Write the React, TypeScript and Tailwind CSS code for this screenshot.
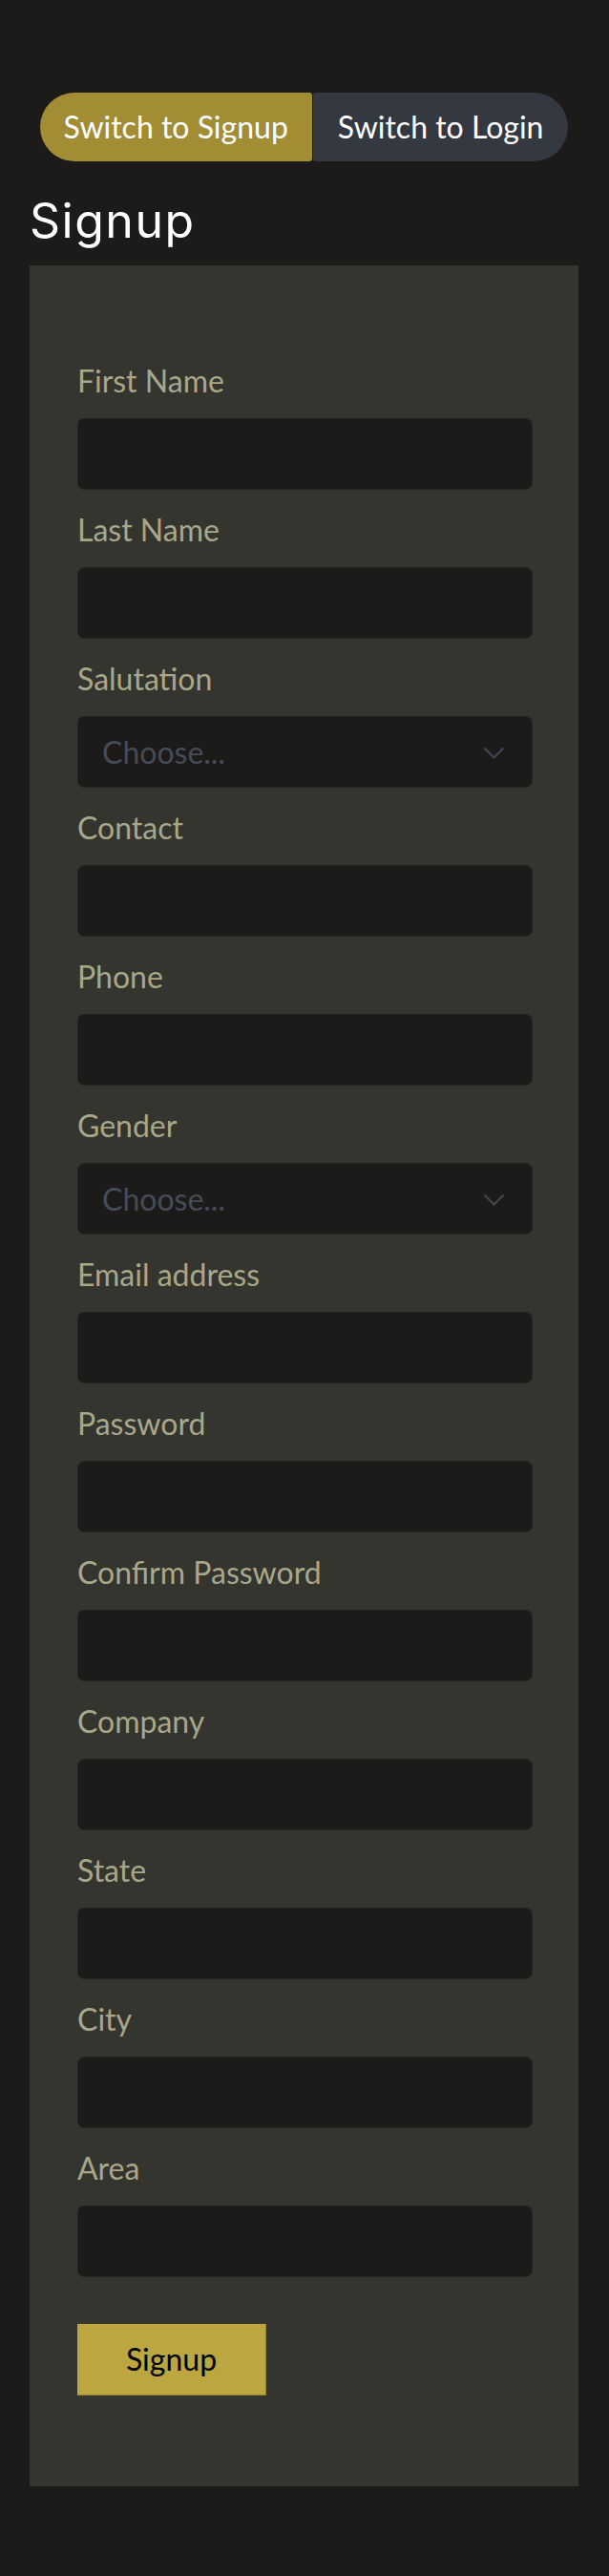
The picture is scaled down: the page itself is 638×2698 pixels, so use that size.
import { useState } from "react";

const fields: { label: string; type: "text" | "select" | "password" | "email" }[] = [
  { label: "First Name", type: "text" },
  { label: "Last Name", type: "text" },
  { label: "Salutation", type: "select" },
  { label: "Contact", type: "text" },
  { label: "Phone", type: "text" },
  { label: "Gender", type: "select" },
  { label: "Email address", type: "email" },
  { label: "Password", type: "password" },
  { label: "Confirm Password", type: "password" },
  { label: "Company", type: "text" },
  { label: "State", type: "text" },
  { label: "City", type: "text" },
  { label: "Area", type: "text" },
];

function Chevron() {
  return (
    <svg width="23" height="14" viewBox="0 0 23 14" fill="none" className="pointer-events-none absolute right-[29px] top-[32px]">
      <path d="M1.5 1.5 L11.5 11.5 L21.5 1.5" stroke="#3f4754" strokeWidth="2.2" />
    </svg>
  );
}

export default function App() {
  const [mode, setMode] = useState<"signup" | "login">("signup");

  return (
    <div className="min-h-[2698px] bg-[#1c1b19] pl-[31px] pr-[32px] pt-[97px] pb-[96px] font-['Lato',sans-serif]">
      <div className="flex justify-center">
        <button
          type="button"
          onClick={() => setMode("signup")}
          className="h-[72px] rounded-l-[36px] rounded-r-[3px] bg-[#a28d35] px-[25px] text-[32px] text-white"
        >
          Switch to Signup
        </button>
        <button
          type="button"
          onClick={() => setMode("login")}
          className="ml-px h-[72px] rounded-l-[3px] rounded-r-[36px] bg-[#343841] px-[26px] text-[32px] text-white"
        >
          Switch to Login
        </button>
      </div>

      <h2 className="mt-[30px] font-['Inter',sans-serif] text-[50px] leading-[64px] tracking-[1.5px] text-white">
        {mode === "signup" ? "Signup" : "Login"}
      </h2>

      <form
        className="mt-[15px] bg-[#353530] pl-[50px] pr-[48px] pt-[96px] pb-[95px]"
        onSubmit={(e) => e.preventDefault()}
      >
        {fields.map((f) => (
          <div key={f.label} className="mb-[17px]">
            <label className="mb-[14px] block text-[32px] leading-[50px] text-[#a9a78a]">{f.label}</label>
            {f.type === "select" ? (
              <div className="relative">
                <select
                  defaultValue=""
                  className="h-[75px] w-full appearance-none rounded-[7px] border border-[#242422] bg-[#1c1b1a] pl-[25px] text-[32px] text-[#454c57] outline-none"
                >
                  <option value="">Choose...</option>
                  <option>Mr.</option>
                  <option>Ms.</option>
                </select>
                <Chevron />
              </div>
            ) : (
              <input
                type={f.type}
                className="block h-[75px] w-full rounded-[7px] border border-[#242422] bg-[#1c1b1a] px-[25px] text-[32px] text-[#a9a78a] outline-none"
              />
            )}
          </div>
        ))}
        <button
          type="submit"
          className="mt-[32px] h-[75px] w-[198px] border-r border-b border-[#8f7f2e] bg-[#bba63f] text-[32px] text-black"
        >
          Signup
        </button>
      </form>
    </div>
  );
}
